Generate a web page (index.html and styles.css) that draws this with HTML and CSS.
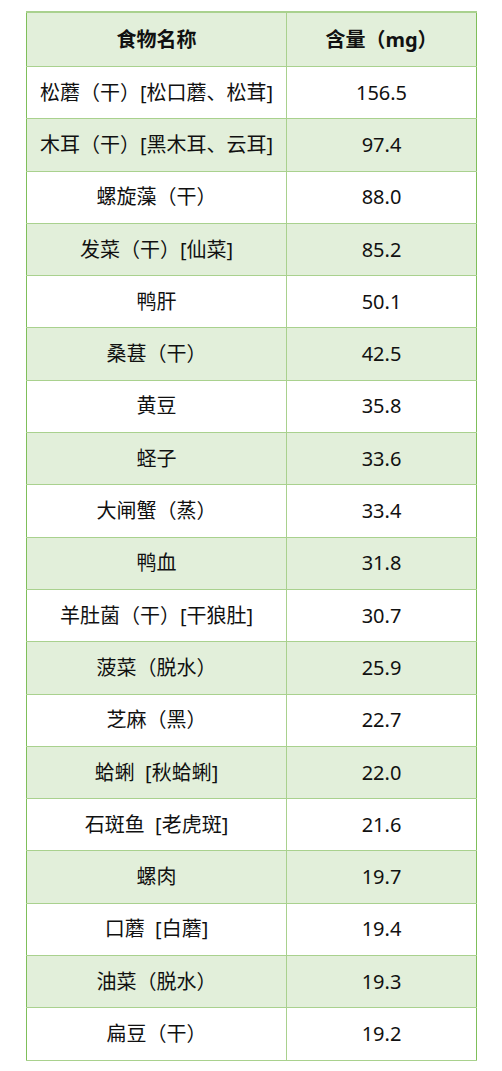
FILE: index.html
```html
<!DOCTYPE html>
<html>
<head>
<meta charset="utf-8">
<link rel="stylesheet" href="styles.css">
</head>
<body>
<div class="wrap">
<table class="tbl">
<thead>
<tr><th class="c1">食物名称</th><th class="c2">含量（mg）</th></tr>
</thead>
<tbody>
<tr><td>松蘑（干）[松口蘑、松茸]</td><td>156.5</td></tr>
<tr class="alt"><td>木耳（干）[黑木耳、云耳]</td><td>97.4</td></tr>
<tr><td>螺旋藻（干）</td><td>88.0</td></tr>
<tr class="alt"><td>发菜（干）[仙菜]</td><td>85.2</td></tr>
<tr><td>鸭肝</td><td>50.1</td></tr>
<tr class="alt"><td>桑葚（干）</td><td>42.5</td></tr>
<tr><td>黄豆</td><td>35.8</td></tr>
<tr class="alt"><td>蛏子</td><td>33.6</td></tr>
<tr><td>大闸蟹（蒸）</td><td>33.4</td></tr>
<tr class="alt"><td>鸭血</td><td>31.8</td></tr>
<tr><td>羊肚菌（干）[干狼肚]</td><td>30.7</td></tr>
<tr class="alt"><td>菠菜（脱水）</td><td>25.9</td></tr>
<tr><td>芝麻（黑）</td><td>22.7</td></tr>
<tr class="alt"><td>蛤蜊&nbsp;&nbsp;[秋蛤蜊]</td><td>22.0</td></tr>
<tr><td>石斑鱼&nbsp;&nbsp;[老虎斑]</td><td>21.6</td></tr>
<tr class="alt"><td>螺肉</td><td>19.7</td></tr>
<tr><td>口蘑&nbsp;&nbsp;[白蘑]</td><td>19.4</td></tr>
<tr class="alt"><td>油菜（脱水）</td><td>19.3</td></tr>
<tr><td>扁豆（干）</td><td>19.2</td></tr>
</tbody>
</table>
</div>
</body>
</html>
```

FILE: styles.css
```css
html, body {
  margin: 0;
  padding: 0;
  background: #ffffff;
}
.wrap {
  padding: 11px 0 0 26px;
}
.tbl {
  border-collapse: collapse;
  width: 451px;
  table-layout: fixed;
  font-family: "Noto Sans", "Noto Sans CJK SC", sans-serif;
  font-size: 20px;
  color: #111111;
  border-left: 1px solid #7fbf5a;
  border-right: 1px solid #7fbf5a;
}
.tbl th, .tbl td {
  border-top: 1px solid #a9d18e;
  border-bottom: 1px solid #a9d18e;
  text-align: center;
  vertical-align: middle;
  padding: 0;
  line-height: 28px;
}
.tbl th + th, .tbl td + td {
  border-left: 1px solid #a9d18e;
}
.tbl th {
  height: 53px;
  background: #e2efda;
  font-weight: bold;
  border-top: 2px solid #a9d18e;
}
.tbl td {
  height: 51.3px;
  font-weight: normal;
}
.c1 { width: 259px; }
.tbl tr.alt td {
  background: #e2efda;
}
```
